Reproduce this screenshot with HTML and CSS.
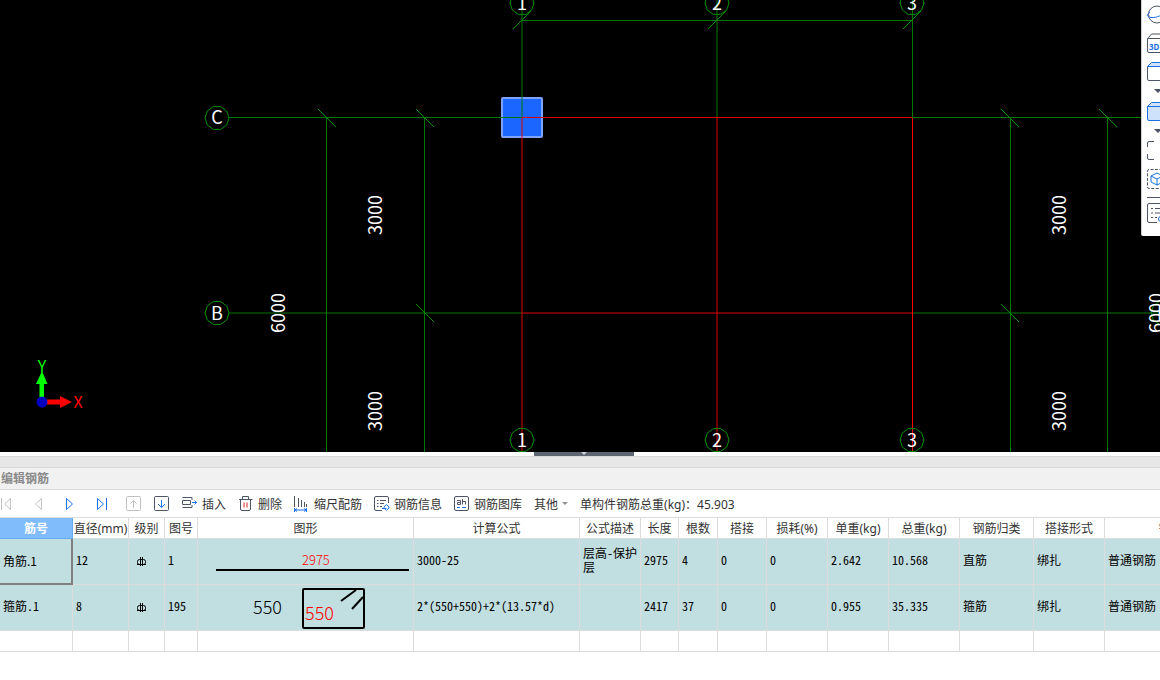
FILE: index.html
```
<!DOCTYPE html>
<html lang="zh-CN">
<head>
<meta charset="utf-8">
<title>编辑钢筋</title>
<link rel="stylesheet" href="styles.css">
</head>
<body>
<main class="app">
  <section class="viewport" aria-label="绘图区">
    <svg class="drawing" width="100%" height="100%">
      <defs>
        <polygon id="bubble" points="12,0 9.7,7 3.7,11.4 -3.7,11.4 -9.7,7 -12,0 -9.7,-7 -3.7,-11.4 3.7,-11.4 9.7,-7"/>
        <path id="tick" d="M-9-9L9 9"/>
        <path id="tick-top" d="M-9 9L9-9"/>
      </defs>
      <rect class="column" x="502" y="98" width="40" height="39" rx="1"/>
      <g class="axis">
        <path d="M229 117.5H522M912 117.5H2000M229 313H522M912 313H2000M522 20.5H912.5M522 0V118M717 0V118M912.5 0V118"/>
        <path d="M326.5 118V1200M424.5 118V1200M1010.5 118V1200M1107.5 118V1200"/>
      </g>
      <g class="ticks">
        <use href="#tick" x="327" y="118"/><use href="#tick" x="425" y="118"/>
        <use href="#tick" x="1010" y="118"/><use href="#tick" x="1108" y="118"/>
        <use href="#tick" x="425" y="313"/><use href="#tick" x="1010" y="313"/>
        <use href="#tick-top" x="522" y="20"/><use href="#tick-top" x="717" y="20"/><use href="#tick-top" x="912" y="20"/>
      </g>
      <g class="beam">
        <path d="M522 118V452M717 118V452M522 117.5H912M522 313H912"/>
        <path class="beam-edge" d="M912.5 118V452"/>
      </g>
      <g class="bubbles">
        <use href="#bubble" x="217" y="118"/><use href="#bubble" x="217" y="313"/>
        <use href="#bubble" x="522" y="3"/><use href="#bubble" x="717" y="3"/><use href="#bubble" x="912" y="3"/>
        <use href="#bubble" x="522" y="440"/><use href="#bubble" x="717" y="440"/><use href="#bubble" x="912" y="440"/>
        <use href="#bubble" x="1163" y="313"/>
      </g>
      <g class="label">
        <text x="217" y="124">C</text><text x="217" y="320">B</text><text x="1163" y="320">B</text>
        <text x="522" y="10">1</text><text x="717" y="10">2</text><text x="912" y="10">3</text>
        <text x="522" y="447">1</text><text x="717" y="447">2</text><text x="912" y="447">3</text>
        <text transform="translate(382 215) rotate(-90)">3000</text>
        <text transform="translate(382 411) rotate(-90)">3000</text>
        <text transform="translate(285 313) rotate(-90)">6000</text>
        <text transform="translate(1066 215) rotate(-90)">3000</text>
        <text transform="translate(1066 411) rotate(-90)">3000</text>
        <text transform="translate(1163 313) rotate(-90)">6000</text>
      </g>
      <path fill="#0f0" d="M39.5 398V384H36L42 371L47.5 384H44V398z"/>
      <path fill="#f00" d="M46 399.5H60V396L72 402L60 408V404.5H46z"/>
      <circle cx="42" cy="402" r="5.5" fill="#0000c0"/>
      <text class="ucs ucs-y" x="42" y="372">Y</text>
      <text class="ucs ucs-x" x="78" y="408">X</text>
    </svg>
    <aside class="view-tools" aria-label="视图工具">
      <button class="view-btn" aria-label="动态观察"><svg width="20" height="20" viewBox="0 0 20 20"><circle cx="10" cy="9.5" r="8.5"/><path class="blue" d="M3 7C-1 10 0 12 4 12.5C10 13 16 10 18 6"/></svg></button>
      <button class="view-btn" aria-label="三维"><svg width="20" height="20" viewBox="0 0 20 20"><path d="M.5 18V6L4.500 1H20M.5 5.500H20M.5 18Q.5 19.500 2 19.500H20"/><text x="2" y="17">3D</text></svg></button>
      <button class="view-btn" aria-label="俯视"><svg width="20" height="20" viewBox="0 0 20 20"><path class="blue tint" d="M.5 5.5L4.5 1.500H21V5.500z"/><path d="M.5 6V18Q.5 19.500 2 19.500H20"/></svg></button>
      <svg class="view-caret" width="8" height="4"><path d="M0 0H8L4 4z"/></svg>
      <button class="view-btn" aria-label="实体显示"><svg width="20" height="20" viewBox="0 0 20 20"><path class="blue tint" d="M.5 5.5L4.5 1.500H21V19.500H2Q.5 19.500 .5 18zM.5 5.500H21"/></svg></button>
      <svg class="view-caret" width="8" height="4"><path d="M0 0H8L4 4z"/></svg>
      <button class="view-btn" aria-label="全屏"><svg width="20" height="20" viewBox="0 0 20 20"><path d="M7 .5H2Q.5.5.5 2V6M.5 13V17Q.5 18.5 2 18.5H7"/></svg></button>
      <button class="view-btn" aria-label="局部三维"><svg width="20" height="20" viewBox="0 0 20 20"><path stroke-dasharray="3 1.5" d="M20 .5H2Q.5.5.5 2V18Q.5 19.5 2 19.5H20"/><path class="blue" d="M4 7L10 4L16 7V13L10 16L4 13zM4 7L10 10L16 7M10 10V16"/></svg></button>
      <hr class="view-rule">
      <button class="view-btn" aria-label="显示设置"><svg width="20" height="20" viewBox="0 0 20 20"><path d="M20 .5H2Q.5.5.5 2V18Q.5 19.5 2 19.5H10M4 5.5H6M8 5.5H15M4 10H6M8 10H15M4 14.5H6M8 14.5H10"/><circle class="blue" cx="14" cy="16" r="2.5"/></svg></button>
    </aside>
  </section>

  <section class="panel">
    <div class="splitter"><button class="splitter-grip" aria-label="折叠"><svg width="8" height="4"><path d="M1 0H7L4 3z" fill="#ccd0d6"/></svg></button></div>
    <div class="band"></div>
    <h1 class="panel-title">编辑钢筋</h1>
    <div class="toolbar">
      <div class="nav">
        <button class="tool off" aria-label="首条"><svg width="14" height="16" viewBox="2 0 14 16"><path d="M3.5 2V14M12.5 2.5V13.5L6.5 8z"/></svg></button>
        <button class="tool off" aria-label="上一条"><svg width="16" height="16"><path d="M11.5 2.5V13.5L5.5 8z"/></svg></button>
        <button class="tool on" aria-label="下一条"><svg width="16" height="16"><path d="M4.5 2.5V13.5L10.5 8z"/></svg></button>
        <button class="tool on" aria-label="末条"><svg width="16" height="16"><path d="M3.5 2.5V13.5L9.5 8zM12.5 2V14"/></svg></button>
        <button class="tool off" aria-label="上移"><svg width="16" height="16"><rect x=".5" y=".5" width="14" height="14" rx="1"/><path d="M7.5 12V4.5M4.5 7.5L7.5 4.5L10.5 7.5"/></svg></button>
      </div>
      <button class="tool" aria-label="下移"><svg width="16" height="16"><rect x=".5" y=".5" width="14" height="14" rx="1"/><path class="blue" d="M7.5 4V11.5M4 8L7.5 11.5L11 8"/></svg></button>
      <button class="tool"><svg width="16" height="16"><path d="M10 4V1.500H.5M.5 11.500H10V9M8.500 4.500H.5V8.500H8.500z"/><path class="blue" d="M10 6.500H14.500M12.500 4.500L14.500 6.500L12.500 8.500"/></svg><span class="caption">插入</span></button>
      <button class="tool"><svg width="16" height="16"><path d="M1 3.5H14.500M4.500 3.500V.5H10.500V3.500M2.500 4V13Q2.500 14.500 4 14.500H11Q12.500 14.500 12.500 13V4"/><path class="red" d="M6 6.500V11.500M9 6.500V11.500"/></svg><span class="caption">删除</span></button>
      <button class="tool"><svg width="16" height="16"><path d="M.5 0V11M4.5 2V11M7.5 4V11M10.500 6V11M12.500 8V11"/><path class="blue" d="M.5 12V16M12.5 12V16M1 14H12M3 12.5L1 14L3 15.5M10 12.5L12 14L10 15.5"/></svg><span class="caption">缩尺配筋</span></button>
      <button class="tool"><svg width="16" height="16"><path d="M8 14.5H2Q.5 14.5.5 13V2Q.5.5 2 .5H13Q14.5.5 14.5 2V7M3 4.5H4.5M6 4.5H12M3 7.5H4.5M6 7.5H10M3 10.5H4.5M6 10.5H8"/><path class="blue" d="M10 11L12.5 8.5L15 11V12L12.5 14.5L10 12zM8 12.5H12.5"/></svg><span class="caption">钢筋信息</span></button>
      <button class="tool"><svg width="16" height="16"><rect x=".5" y=".5" width="14" height="14" rx="1.5"/><path d="M3 4.5H6.5V8.500H3.500V6.500H6.500M8.500 3V8.500M8.500 5.500H11.500V8.500"/><path class="blue" d="M3 11.500H6M8 11.500H12"/></svg><span class="caption">钢筋图库</span></button>
      <button class="tool"><span class="caption">其他</span><svg class="caret" width="6" height="4"><path d="M0 0H6L3 3z"/></svg></button>
      <span class="caption">单构件钢筋总重(kg)：45.903</span>
    </div>
    <div class="grid-wrap">
      <table class="grid">
        <colgroup><col class="w73"><col class="w56"><col class="w36"><col class="w33"><col class="w216"><col class="w166"><col class="w61"><col class="w38"><col class="w39"><col class="w49"><col class="w61"><col class="w61"><col class="w71"><col class="w74"><col class="w71"><col class="w156"></colgroup>
        <thead>
          <tr><th class="current">筋号</th><th>直径(mm)</th><th>级别</th><th>图号</th><th>图形</th><th>计算公式</th><th>公式描述</th><th>长度</th><th>根数</th><th>搭接</th><th>损耗(%)</th><th>单重(kg)</th><th>总重(kg)</th><th>钢筋归类</th><th>搭接形式</th><th>钢筋类型</th></tr>
        </thead>
        <tbody>
          <tr class="filled">
            <td class="selected">角筋.1</td><td>12</td>
            <td><svg class="grade" width="12" height="12"><rect x="1.5" y="3.5" width="8" height="5" rx="2"/><path d="M4.5 1V10M6.5 1V10M1 8.5H10"/></svg></td>
            <td>1</td>
            <td class="shape"><svg width="215" height="45"><path d="M18 31H211"/><text class="dim-sm red-text" x="104" y="26">2975</text></svg></td>
            <td>3000-25</td><td class="desc">层高-保护层</td><td>2975</td><td>4</td><td>0</td><td>0</td><td>2.642</td><td>10.568</td><td>直筋</td><td>绑扎</td><td>普通钢筋</td>
          </tr>
          <tr class="filled">
            <td>箍筋.1</td><td>8</td>
            <td><svg class="grade" width="12" height="12"><rect x="1.5" y="3.5" width="8" height="5" rx="2"/><path d="M4.5 1V10M6.5 1V10M1 8.5H10"/></svg></td>
            <td>195</td>
            <td class="shape"><svg width="215" height="45"><rect x="105" y="4" width="61" height="39" rx="1"/><path d="M143 16L158 5M154 24L165 12"/><text class="dim" x="55" y="29">550</text><text class="dim red-text" x="107" y="35">550</text></svg></td>
            <td>2*(550+550)+2*(13.57*d)</td><td></td><td>2417</td><td>37</td><td>0</td><td>0</td><td>0.955</td><td>35.335</td><td>箍筋</td><td>绑扎</td><td>普通钢筋</td>
          </tr>
          <tr class="blank"><td></td><td></td><td></td><td></td><td></td><td></td><td></td><td></td><td></td><td></td><td></td><td></td><td></td><td></td><td></td><td></td></tr>
        </tbody>
      </table>
    </div>
  </section>
</main>
</body>
</html>
```

FILE: styles.css
```
* { box-sizing: border-box; }
body {
  margin: 0;
  background: #fff;
  color: #333;
  font: 12px/16px "Noto Sans", "Noto Sans CJK SC", sans-serif;
}
button {
  margin: 0;
  padding: 0;
  border: 0;
  background: none;
  font: inherit;
  color: inherit;
}
svg { display: block; flex: none; }

.app { display: flex; flex-direction: column; min-height: 100vh; }

/* drawing area */
.viewport { position: relative; flex: 1; background: #000; overflow: hidden; }
.drawing { position: absolute; inset: 0; }
.axis { stroke: #007800; fill: none; }
.ticks, .bubbles { stroke: #009000; fill: none; }
.beam { stroke: #e00000; fill: none; }
.beam-edge { stroke: #f00; }
.column { fill: #1a66ff; stroke: #7fa3f8; stroke-width: 2; }
.label { fill: #fff; font: 18px "Noto Sans CJK SC", sans-serif; text-anchor: middle; }
.ucs { font: 16px "Noto Sans CJK SC", sans-serif; text-anchor: middle; }
.ucs-x { fill: #f00; }
.ucs-y { fill: #0f0; }

.view-tools {
  position: absolute;
  top: 0;
  right: 0;
  width: 19px;
  padding: 5px 0 13px 5px;
  display: flex;
  flex-direction: column;
  gap: 8px;
  overflow: hidden;
  background: #fff;
  border-left: 1px solid #d0d0d0;
  border-radius: 0 0 0 2px;
}
.view-btn { display: block; width: 20px; height: 20px; }
.view-btn svg { fill: none; stroke: #4e5565; stroke-width: 1; }
.view-btn .blue { stroke: #1a6fe0; }
.view-btn .tint { fill: #cfe2fb; }
.view-btn text { fill: #1a6fe0; stroke: none; font: bold 8px "Noto Sans", sans-serif; }
.view-caret { margin-left: 7px; fill: #4e5565; }
.view-rule { width: 20px; height: 1px; margin: 0 0 -3px; border: 0; background: #4e5565; }

/* lower panel */
.panel { padding-bottom: 28px; }
.splitter { display: flex; justify-content: center; height: 4px; padding-left: 8px; }
.splitter-grip { display: flex; justify-content: center; width: 100px; height: 4px; background: #5f6673; }
.band { height: 12px; background: #e7e7e7; border: 1px solid #d8d8d8; border-width: 1px 0; }
.panel-title {
  margin: 0;
  padding: 3px 1px 2px;
  background: #f1f1f1;
  border-bottom: 1px solid #dcdcdc;
  font-size: 12px;
  line-height: 16px;
  font-weight: 700;
  color: #8a8a8a;
}
.toolbar {
  display: flex;
  align-items: center;
  gap: 12px;
  height: 28px;
  border-bottom: 1px solid #dcdcdc;
  white-space: nowrap;
}
.nav { display: flex; gap: 16px; }
.tool { display: flex; align-items: center; gap: 4px; }
.caption { padding-top: 2px; }
.tool svg { fill: none; stroke: #4e5565; stroke-width: 1; }
.off svg { stroke: #c0c0c0; }
.on svg, .tool .blue { stroke: #1a74e8; }
.tool .red { stroke: #e02020; }
.tool .caret { fill: #909090; stroke: none; }

/* rebar table */
.grid-wrap { overflow: hidden; }
.grid { table-layout: fixed; width: 1261px; border-collapse: separate; border-spacing: 0; }
.w33 { width: 33px; }
.w36 { width: 36px; }
.w38 { width: 38px; }
.w39 { width: 39px; }
.w49 { width: 49px; }
.w56 { width: 56px; }
.w61 { width: 61px; }
.w71 { width: 71px; }
.w73 { width: 73px; }
.w74 { width: 74px; }
.w156 { width: 156px; }
.w166 { width: 166px; }
.w216 { width: 216px; }
.grid th, .grid td { border: 1px solid #dcdcdc; border-width: 0 1px 1px 0; white-space: nowrap; }
.grid th { height: 21px; padding: 2px 0 0; font-weight: 400; text-align: center; }
.grid .current { background: #80bcfc; border-color: #66aaf0; color: #fff; font-weight: 700; }
.grid td {
  height: 46px;
  padding: 0 0 4px 3px;
  color: #000;
  font-family: "Noto Sans CJK SC", sans-serif;
  font-feature-settings: "hwid";
}
.filled { background: #c1dee0; }
.grid .selected {
  padding-bottom: 2px;
  border-color: #808080;
  box-shadow: inset -1px -1px 0 #808080;
  font-feature-settings: normal;
}
.grid .desc { white-space: normal; line-height: 14px; }
.grid .shape { padding: 0; }
.shape svg { fill: none; stroke: #000; stroke-width: 2; }
.shape text { fill: #000; stroke: none; font-weight: 300; font-feature-settings: normal; }
.shape .dim { font-size: 18px; }
.shape .dim-sm { font-size: 13px; }
.shape .red-text { fill: #f00; }
.grade { margin: 4px 0 0 4px; fill: none; stroke: #000; }
.blank td { height: 21px; padding: 0; }
```
